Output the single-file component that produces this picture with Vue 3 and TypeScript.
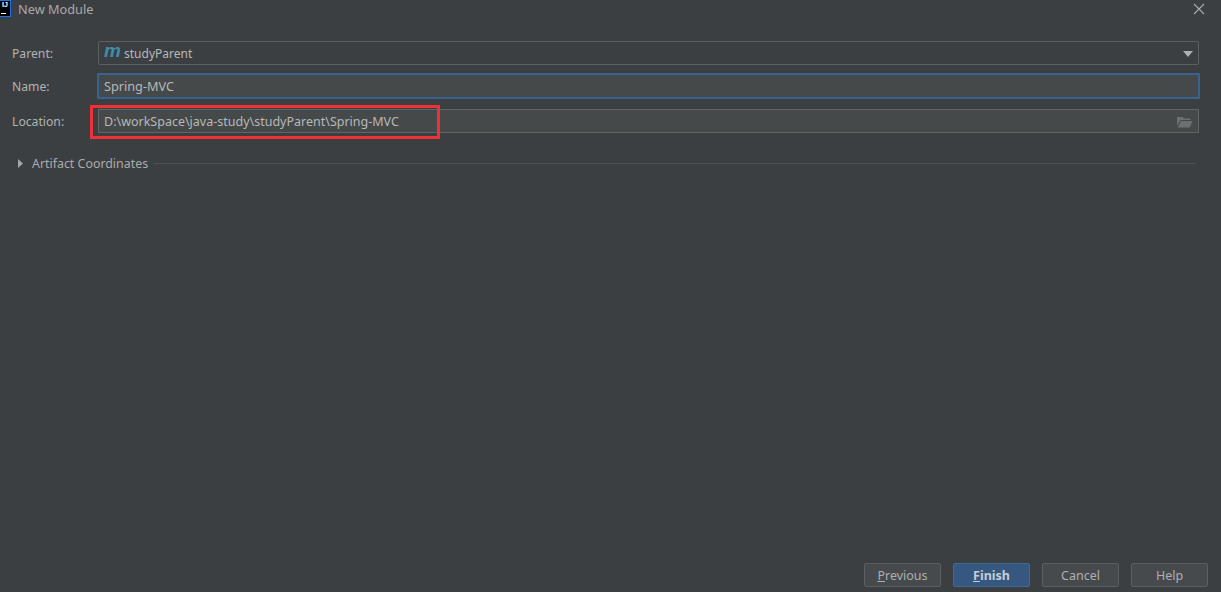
<script setup lang="ts">
const buttons: { label: string; mn?: string; rest?: string; primary?: boolean }[] = [
  { label: '', mn: 'P', rest: 'revious' },
  { label: '', mn: 'F', rest: 'inish', primary: true },
  { label: 'Cancel' },
  { label: 'Help' },
]
</script>

<template>
  <div class="dialog">
    <header class="title">
      <div class="logo"><span class="logo-t">IJ</span><span class="logo-b"></span></div>
      <span class="title-text">New Module</span>
      <svg class="close" width="12" height="12" viewBox="0 0 12 12">
        <path d="M1 1 L11 11 M11 1 L1 11" stroke="#a9acad" stroke-width="1.1" fill="none" />
      </svg>
    </header>

    <form class="form" @submit.prevent>
      <div class="row parent-row">
        <label class="lbl">Parent:</label>
        <div class="field combo">
          <span class="m">m</span>
          <span class="val narrow">studyParent</span>
          <svg class="arrow" width="10" height="6" viewBox="0 0 10 6"><path d="M0 0 H10 L5 6 Z" fill="#aeb0b2" /></svg>
        </div>
      </div>
      <div class="row name-row">
        <label class="lbl">Name:</label>
        <div class="field focus"><span class="val wide">Spring-MVC</span></div>
      </div>
      <div class="row loc-row">
        <label class="lbl">Location:</label>
        <div class="field loc">
          <span class="val">D:\workSpace\java-study\studyParent\Spring-MVC</span>
          <svg class="folder" width="16" height="12" viewBox="0 0 16 12">
            <path d="M0 1 H5.5 L7 2.5 H13.5 V4 H3.5 L0 10 Z" fill="#6d7071" />
            <path d="M4 5 H15.5 L13 11.5 H0.6 Z" fill="#6d7071" />
          </svg>
          <div class="mark"></div>
        </div>
      </div>
      <div class="artifact">
        <svg class="tri" width="5" height="9" viewBox="0 0 5 9"><path d="M0 0 L5 4.5 L0 9 Z" fill="#a3a6a8" /></svg>
        <span class="art-text">Artifact Coordinates</span>
        <span class="sep"></span>
      </div>
    </form>

    <footer class="footer">
      <button
        v-for="b in buttons"
        :key="b.label + (b.rest ?? '')"
        class="btn"
        :class="{ primary: b.primary }"
        type="button"
      >
        <template v-if="b.mn"><u>{{ b.mn }}</u>{{ b.rest }}</template>
        <template v-else>{{ b.label }}</template>
      </button>
    </footer>
  </div>
</template>

<style>
html, body { margin: 0; background: #3c3f41; }
</style>

<style scoped>
.dialog {
  width: 1221px;
  height: 592px;
  background: #3c3f41;
  color: #b4b6b7;
  font-family: "Noto Sans", "Noto Sans CJK SC", sans-serif;
  font-size: 12.5px;
  display: flex;
  flex-direction: column;
  overflow: hidden;
  box-sizing: border-box;
}
.title {
  height: 19px;
  display: flex;
  align-items: center;
  position: relative;
  flex: none;
}
.logo {
  width: 10px;
  height: 15px;
  margin-top: -2px;
  background: #000;
  border: 1px solid #1a73e8;
  border-left: none;
  position: relative;
  flex: none;
  overflow: hidden;
}
.logo-t {
  position: absolute;
  left: 2px;
  top: -1px;
  color: #fff;
  font: bold 7px/9px "Liberation Sans", sans-serif;
}
.logo-b {
  position: absolute;
  left: 1px;
  bottom: 2px;
  width: 5px;
  height: 1px;
  background: #fff;
}
.title-text {
  margin-left: 7px;
  margin-top: -1px;
  color: #a7a9aa;
  font-size: 12.75px;
}
.close {
  position: absolute;
  left: 1193px;
  top: 3px;
}
.form {
  display: flex;
  flex-direction: column;
  padding: 22px 22px 0 12px;
}
.row {
  display: flex;
  align-items: center;
}
.lbl {
  width: 86px;
  flex: none;
  color: #b0b2b3;
  font-size: 12.2px;
}
.field {
  flex: 1;
  height: 24px;
  box-sizing: border-box;
  display: flex;
  align-items: center;
  padding-left: 5px;
  background: #45494a;
  border: 1px solid #646464;
  position: relative;
}
.val { color: #b6b8b9; white-space: nowrap; }
.narrow { font-size: 12px; }
.wide { font-size: 12.7px; margin-left: -1px; }
.combo {
  background: #3c3f41;
  border-color: #5e6060;
  border-radius: 2px;
}
.m {
  font: italic bold 19px/20px "Liberation Sans", sans-serif;
  color: #3d8ea8;
  margin-right: 5px;
  margin-top: -4px;
  width: 15px;
}
.arrow {
  position: absolute;
  right: 5px;
  top: 9px;
}
.name-row {
  margin-top: 8px;
}
.focus {
  flex: none;
  width: 1103px;
  height: 26px;
  margin-left: -1px;
  padding-left: 6px;
  border: 2px solid #3a6290;
  border-radius: 1px;
}
.loc-row {
  margin-top: 10px;
}
.folder {
  position: absolute;
  right: 5px;
  top: 6px;
}
.mark {
  position: absolute;
  left: -9px;
  top: -5px;
  width: 344px;
  height: 28px;
  border: 3px solid #ee3138;
}
.artifact {
  display: flex;
  align-items: center;
  margin-top: 21px;
  height: 18px;
}
.tri { margin-left: 6px; flex: none; }
.art-text { margin-left: 9px; color: #a9abac; font-size: 12.4px; }
.sep {
  flex: 1;
  height: 1px;
  margin-left: 6px;
  margin-right: 3px;
  margin-top: 1px;
  background: #4f5152;
}
.footer {
  margin-top: auto;
  display: flex;
  justify-content: flex-end;
  gap: 12px;
  padding: 0 13px 5px 0;
}
.btn {
  width: 77px;
  height: 24px;
  padding: 0;
  box-sizing: border-box;
  background: #474a4c;
  border: 1px solid #5c5e5f;
  border-radius: 2px;
  color: #adafb0;
  font: inherit;
}
.btn.primary {
  background: #365880;
  border-color: #42698f;
  color: #c4ccd4;
  font-weight: 700;
}
</style>
